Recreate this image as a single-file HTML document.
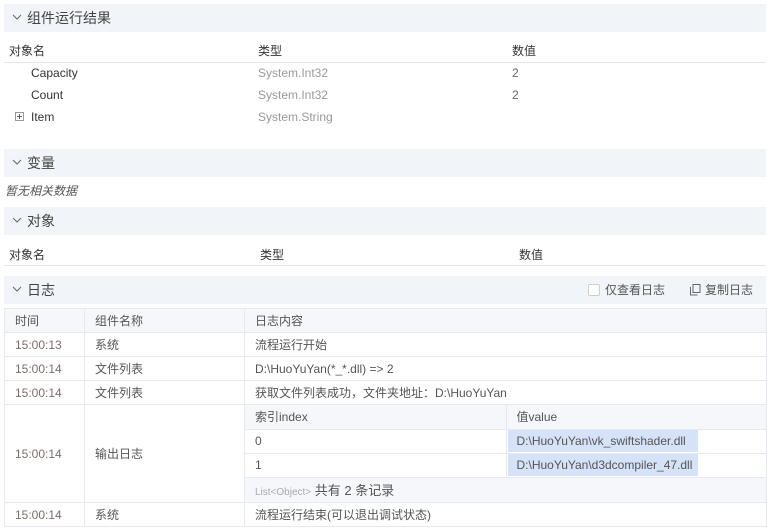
<!DOCTYPE html>
<html><head><meta charset="utf-8"><style>
*{margin:0;padding:0;box-sizing:border-box}
body{width:770px;height:530px;background:#fff;font-family:"Liberation Sans","Noto Sans CJK SC",sans-serif;font-size:12px;color:#555;position:relative;overflow:hidden}
.a{position:absolute;white-space:nowrap}
.hd{position:absolute;left:4px;width:762px;height:28px;background:#f1f4f9;font-size:14px;color:#444;line-height:28px;padding-left:23px}
.hd svg{position:absolute;left:8px;top:10px}
.line{position:absolute;left:4px;width:762px;height:1px;background:#e3e6eb}
table{position:absolute;left:4px;top:308px;width:763px;border-collapse:collapse}
td{border:1px solid #e6e9f0;padding:0 0 0 10px;height:24px;color:#555;vertical-align:middle}
td.t{color:#7f6c6c}
tr.h td{background:#f5f7fa}
.in{position:static;width:100%}
</style></head><body>
<div class="hd" style="top:4px"><svg width="10" height="7"><path d="M1 1 L5 5 L9 1" fill="none" stroke="#666" stroke-width="1"/></svg>组件运行结果</div>
<div class="a" style="left:9px;top:42px;color:#333">对象名</div>
<div class="a" style="left:258px;top:42px;color:#333">类型</div>
<div class="a" style="left:512px;top:42px;color:#333">数值</div>
<div class="line" style="top:62px"></div>
<div class="a" style="left:31px;top:66px;color:#333">Capacity</div>
<div class="a" style="left:258px;top:66px;color:#999">System.Int32</div>
<div class="a" style="left:512px;top:66px;color:#666">2</div>
<div class="a" style="left:31px;top:88px;color:#333">Count</div>
<div class="a" style="left:258px;top:88px;color:#999">System.Int32</div>
<div class="a" style="left:512px;top:88px;color:#666">2</div>
<div class="a" style="left:15px;top:112px;width:9px;height:9px;border:1px solid #999"><div style="position:absolute;left:1px;top:3px;width:5px;height:1px;background:#666"></div><div style="position:absolute;left:3px;top:1px;width:1px;height:5px;background:#666"></div></div>
<div class="a" style="left:31px;top:110px;color:#333">Item</div>
<div class="a" style="left:258px;top:110px;color:#999">System.String</div>
<div class="hd" style="top:149px"><svg width="10" height="7"><path d="M1 1 L5 5 L9 1" fill="none" stroke="#666" stroke-width="1"/></svg>变量</div>
<div class="a" style="left:5px;top:182px;font-style:italic;color:#555">暂无相关数据</div>
<div class="hd" style="top:207px"><svg width="10" height="7"><path d="M1 1 L5 5 L9 1" fill="none" stroke="#666" stroke-width="1"/></svg>对象</div>
<div class="a" style="left:9px;top:246px;color:#333">对象名</div>
<div class="a" style="left:260px;top:246px;color:#333">类型</div>
<div class="a" style="left:519px;top:246px;color:#333">数值</div>
<div class="line" style="top:265px"></div>
<div class="hd" style="top:276px"><svg width="10" height="7"><path d="M1 1 L5 5 L9 1" fill="none" stroke="#666" stroke-width="1"/></svg>日志
<div class="a" style="left:584px;top:8px;width:12px;height:12px;border:1px solid #ccc;border-radius:2px;background:#fff"></div>
<div class="a" style="left:601px;top:0;font-size:12px;color:#555">仅查看日志</div>
<svg class="a" style="left:686px;top:8px" width="11" height="12"><rect x="3" y="0.5" width="7" height="8" fill="none" stroke="#666"/><path d="M0.5 3v8h7" fill="none" stroke="#666"/></svg>
<div class="a" style="left:701px;top:0;font-size:12px;color:#555">复制日志</div>
</div>
<table>
<tr class="h"><td style="width:80px">时间</td><td style="width:160px">组件名称</td><td>日志内容</td></tr>
<tr><td class="t">15:00:13</td><td>系统</td><td>流程运行开始</td></tr>
<tr><td class="t">15:00:14</td><td>文件列表</td><td>D:\HuoYuYan(*_*.dll) =&gt; 2</td></tr>
<tr><td class="t">15:00:14</td><td>文件列表</td><td>获取文件列表成功，文件夹地址：D:\HuoYuYan</td></tr>
<tr><td class="t">15:00:14</td><td>输出日志</td><td style="padding:0">
<table class="in">
<tr class="h"><td style="border-width:0 1px 1px 0;width:261px;height:23px">索引index</td><td style="border-width:0 0 1px 0">值value</td></tr>
<tr><td style="border-width:0 1px 1px 0">0</td><td style="border-width:0 0 1px 0;padding-left:1px"><span style="display:inline-block;background:#d6e2f8;width:190px;height:22px;line-height:22px;padding-left:9px">D:\HuoYuYan\vk_swiftshader.dll</span></td></tr>
<tr><td style="border-width:0 1px 1px 0">1</td><td style="border-width:0 0 1px 0;padding-left:1px"><span style="display:inline-block;background:#d6e2f8;width:190px;height:22px;line-height:22px;padding-left:9px">D:\HuoYuYan\d3dcompiler_47.dll</span></td></tr>
<tr class="h"><td colspan="2" style="border:0;height:25px;font-size:13px"><span style="font-size:10px;color:#aaa">List&lt;Object&gt;</span> 共有 2 条记录</td></tr>
</table></td></tr>
<tr><td class="t">15:00:14</td><td>系统</td><td>流程运行结束(可以退出调试状态)</td></tr>
</table>
</body></html>
